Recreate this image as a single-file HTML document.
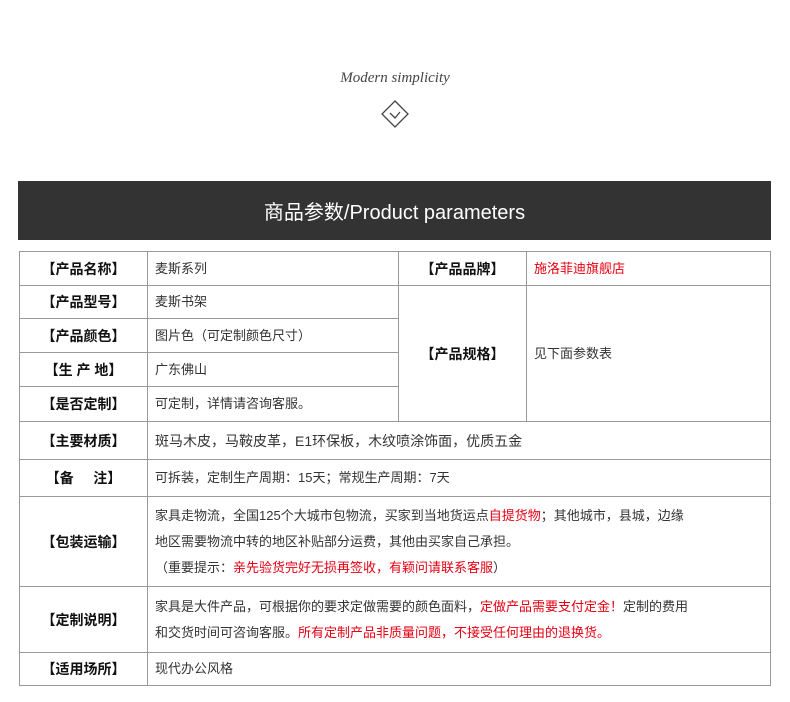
<!DOCTYPE html>
<html><head><meta charset="utf-8"><style>
body{margin:0;width:790px;height:702px;background:#fff;position:relative;overflow:hidden;font-family:"Liberation Sans","Noto Sans CJK SC",sans-serif;color:#333;}
.a{position:absolute;}
.c{position:absolute;border:1px solid #999;box-sizing:border-box;font-size:13px;display:flex;align-items:center;}
.l{justify-content:center;font-weight:bold;color:#111;font-size:14px;}
.v{padding-left:7px;line-height:26px;}
.r{color:#e60012;}
</style></head><body>
<div class="a" style="left:0;top:70px;width:790px;text-align:center;font-family:'Liberation Serif',serif;font-style:italic;font-size:15px;color:#444;">Modern simplicity</div>
<svg class="a" style="left:380px;top:99px" width="30" height="30" viewBox="0 0 30 30"><path d="M15 2 L28 15 L15 28 L2 15 Z" fill="none" stroke="#444" stroke-width="1.3"/><path d="M10 14 L15 19 L20 13" fill="none" stroke="#444" stroke-width="1.3"/></svg>
<div class="a" style="left:18px;top:181px;width:753px;height:59px;background:#333;color:#fff;font-size:20px;display:flex;align-items:center;justify-content:center;">商品参数/Product parameters</div>

<div class="c l" style="left:19px;top:251px;width:129px;height:35px">【产品名称】</div>
<div class="c v" style="left:147px;top:251px;width:252px;height:35px">麦斯系列</div>
<div class="c l" style="left:398px;top:251px;width:129px;height:35px">【产品品牌】</div>
<div class="c v r" style="left:526px;top:251px;width:245px;height:35px">施洛菲迪旗舰店</div>

<div class="c l" style="left:19px;top:285px;width:129px;height:34px">【产品型号】</div>
<div class="c v" style="left:147px;top:285px;width:252px;height:34px">麦斯书架</div>
<div class="c l" style="left:19px;top:318px;width:129px;height:35px">【产品颜色】</div>
<div class="c v" style="left:147px;top:318px;width:252px;height:35px">图片色（可定制颜色尺寸）</div>
<div class="c l" style="left:19px;top:352px;width:129px;height:35px">【生 产 地】</div>
<div class="c v" style="left:147px;top:352px;width:252px;height:35px">广东佛山</div>
<div class="c l" style="left:19px;top:386px;width:129px;height:36px">【是否定制】</div>
<div class="c v" style="left:147px;top:386px;width:252px;height:36px">可定制，详情请咨询客服。</div>
<div class="c l" style="left:398px;top:285px;width:129px;height:137px">【产品规格】</div>
<div class="c v" style="left:526px;top:285px;width:245px;height:137px">见下面参数表</div>

<div class="c l" style="left:19px;top:421px;width:129px;height:39px">【主要材质】</div>
<div class="c v" style="left:147px;top:421px;width:624px;height:39px;font-size:14px">斑马木皮，马鞍皮革，E1环保板，木纹喷涂饰面，优质五金</div>
<div class="c l" style="left:19px;top:459px;width:129px;height:38px">【备&nbsp;&nbsp;&nbsp;&nbsp;&nbsp;注】</div>
<div class="c v" style="left:147px;top:459px;width:624px;height:38px">可拆装，定制生产周期：15天；常规生产周期：7天</div>
<div class="c l" style="left:19px;top:496px;width:129px;height:91px">【包装运输】</div>
<div class="c v" style="left:147px;top:496px;width:624px;height:91px"><div>家具走物流，全国125个大城市包物流，买家到当地货运点<span class="r">自提货物</span>；其他城市，县城，边缘<br>地区需要物流中转的地区补贴部分运费，其他由买家自己承担。<br>（重要提示：<span class="r">亲先验货完好无损再签收，有颖问请联系客服</span>）</div></div>
<div class="c l" style="left:19px;top:586px;width:129px;height:67px">【定制说明】</div>
<div class="c v" style="left:147px;top:586px;width:624px;height:67px"><div>家具是大件产品，可根据你的要求定做需要的颜色面料，<span class="r">定做产品需要支付定金！</span>定制的费用<br>和交货时间可咨询客服。<span class="r">所有定制产品非质量问题，不接受任何理由的退换货。</span></div></div>
<div class="c l" style="left:19px;top:652px;width:129px;height:34px">【适用场所】</div>
<div class="c v" style="left:147px;top:652px;width:624px;height:34px">现代办公风格</div>
</body></html>
